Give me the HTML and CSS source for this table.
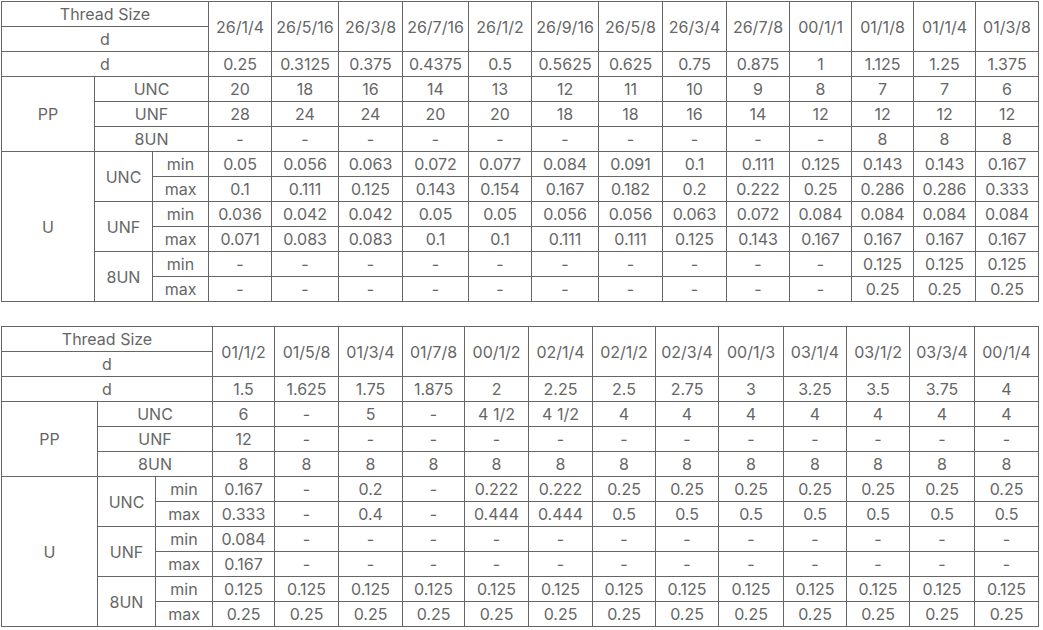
FILE: index.html
```html
<!DOCTYPE html>
<html>
<head>
<meta charset="utf-8">
<link rel="stylesheet" href="styles.css">
</head>
<body>
<div class="page">
<table class="spec t1">
<colgroup>
<col style="width:93px"><col style="width:58px"><col style="width:56px">
<col style="width:63px"><col style="width:67px"><col style="width:64px"><col style="width:66px"><col style="width:63px"><col style="width:67px"><col style="width:64px"><col style="width:64px"><col style="width:63px"><col style="width:62px"><col style="width:62px"><col style="width:62px"><col style="width:63px">
</colgroup>
<tr><td colspan="3">Thread Size</td><td rowspan="2">26/1/4</td><td rowspan="2">26/5/16</td><td rowspan="2">26/3/8</td><td rowspan="2">26/7/16</td><td rowspan="2">26/1/2</td><td rowspan="2">26/9/16</td><td rowspan="2">26/5/8</td><td rowspan="2">26/3/4</td><td rowspan="2">26/7/8</td><td rowspan="2">00/1/1</td><td rowspan="2">01/1/8</td><td rowspan="2">01/1/4</td><td rowspan="2">01/3/8</td></tr>
<tr><td colspan="3">d</td></tr>
<tr><td colspan="3">d</td><td>0.25</td><td>0.3125</td><td>0.375</td><td>0.4375</td><td>0.5</td><td>0.5625</td><td>0.625</td><td>0.75</td><td>0.875</td><td>1</td><td>1.125</td><td>1.25</td><td>1.375</td></tr>
<tr><td rowspan="3">PP</td><td colspan="2">UNC</td><td>20</td><td>18</td><td>16</td><td>14</td><td>13</td><td>12</td><td>11</td><td>10</td><td>9</td><td>8</td><td>7</td><td>7</td><td>6</td></tr>
<tr><td colspan="2">UNF</td><td>28</td><td>24</td><td>24</td><td>20</td><td>20</td><td>18</td><td>18</td><td>16</td><td>14</td><td>12</td><td>12</td><td>12</td><td>12</td></tr>
<tr><td colspan="2">8UN</td><td>-</td><td>-</td><td>-</td><td>-</td><td>-</td><td>-</td><td>-</td><td>-</td><td>-</td><td>-</td><td>8</td><td>8</td><td>8</td></tr>
<tr><td rowspan="6">U</td><td rowspan="2">UNC</td><td>min</td><td>0.05</td><td>0.056</td><td>0.063</td><td>0.072</td><td>0.077</td><td>0.084</td><td>0.091</td><td>0.1</td><td>0.111</td><td>0.125</td><td>0.143</td><td>0.143</td><td>0.167</td></tr>
<tr><td>max</td><td>0.1</td><td>0.111</td><td>0.125</td><td>0.143</td><td>0.154</td><td>0.167</td><td>0.182</td><td>0.2</td><td>0.222</td><td>0.25</td><td>0.286</td><td>0.286</td><td>0.333</td></tr>
<tr><td rowspan="2">UNF</td><td>min</td><td>0.036</td><td>0.042</td><td>0.042</td><td>0.05</td><td>0.05</td><td>0.056</td><td>0.056</td><td>0.063</td><td>0.072</td><td>0.084</td><td>0.084</td><td>0.084</td><td>0.084</td></tr>
<tr><td>max</td><td>0.071</td><td>0.083</td><td>0.083</td><td>0.1</td><td>0.1</td><td>0.111</td><td>0.111</td><td>0.125</td><td>0.143</td><td>0.167</td><td>0.167</td><td>0.167</td><td>0.167</td></tr>
<tr><td rowspan="2">8UN</td><td>min</td><td>-</td><td>-</td><td>-</td><td>-</td><td>-</td><td>-</td><td>-</td><td>-</td><td>-</td><td>-</td><td>0.125</td><td>0.125</td><td>0.125</td></tr>
<tr><td>max</td><td>-</td><td>-</td><td>-</td><td>-</td><td>-</td><td>-</td><td>-</td><td>-</td><td>-</td><td>-</td><td>0.25</td><td>0.25</td><td>0.25</td></tr>
</table>

<table class="spec t2">
<colgroup>
<col style="width:96px"><col style="width:58px"><col style="width:57px">
<col style="width:62px"><col style="width:64px"><col style="width:64px"><col style="width:62px"><col style="width:64px"><col style="width:64px"><col style="width:63px"><col style="width:63px"><col style="width:65px"><col style="width:63px"><col style="width:63px"><col style="width:65px"><col style="width:64px">
</colgroup>
<tr><td colspan="3">Thread Size</td><td rowspan="2">01/1/2</td><td rowspan="2">01/5/8</td><td rowspan="2">01/3/4</td><td rowspan="2">01/7/8</td><td rowspan="2">00/1/2</td><td rowspan="2">02/1/4</td><td rowspan="2">02/1/2</td><td rowspan="2">02/3/4</td><td rowspan="2">00/1/3</td><td rowspan="2">03/1/4</td><td rowspan="2">03/1/2</td><td rowspan="2">03/3/4</td><td rowspan="2">00/1/4</td></tr>
<tr><td colspan="3">d</td></tr>
<tr><td colspan="3">d</td><td>1.5</td><td>1.625</td><td>1.75</td><td>1.875</td><td>2</td><td>2.25</td><td>2.5</td><td>2.75</td><td>3</td><td>3.25</td><td>3.5</td><td>3.75</td><td>4</td></tr>
<tr><td rowspan="3">PP</td><td colspan="2">UNC</td><td>6</td><td>-</td><td>5</td><td>-</td><td>4 1/2</td><td>4 1/2</td><td>4</td><td>4</td><td>4</td><td>4</td><td>4</td><td>4</td><td>4</td></tr>
<tr><td colspan="2">UNF</td><td>12</td><td>-</td><td>-</td><td>-</td><td>-</td><td>-</td><td>-</td><td>-</td><td>-</td><td>-</td><td>-</td><td>-</td><td>-</td></tr>
<tr><td colspan="2">8UN</td><td>8</td><td>8</td><td>8</td><td>8</td><td>8</td><td>8</td><td>8</td><td>8</td><td>8</td><td>8</td><td>8</td><td>8</td><td>8</td></tr>
<tr><td rowspan="6">U</td><td rowspan="2">UNC</td><td>min</td><td>0.167</td><td>-</td><td>0.2</td><td>-</td><td>0.222</td><td>0.222</td><td>0.25</td><td>0.25</td><td>0.25</td><td>0.25</td><td>0.25</td><td>0.25</td><td>0.25</td></tr>
<tr><td>max</td><td>0.333</td><td>-</td><td>0.4</td><td>-</td><td>0.444</td><td>0.444</td><td>0.5</td><td>0.5</td><td>0.5</td><td>0.5</td><td>0.5</td><td>0.5</td><td>0.5</td></tr>
<tr><td rowspan="2">UNF</td><td>min</td><td>0.084</td><td>-</td><td>-</td><td>-</td><td>-</td><td>-</td><td>-</td><td>-</td><td>-</td><td>-</td><td>-</td><td>-</td><td>-</td></tr>
<tr><td>max</td><td>0.167</td><td>-</td><td>-</td><td>-</td><td>-</td><td>-</td><td>-</td><td>-</td><td>-</td><td>-</td><td>-</td><td>-</td><td>-</td></tr>
<tr><td rowspan="2">8UN</td><td>min</td><td>0.125</td><td>0.125</td><td>0.125</td><td>0.125</td><td>0.125</td><td>0.125</td><td>0.125</td><td>0.125</td><td>0.125</td><td>0.125</td><td>0.125</td><td>0.125</td><td>0.125</td></tr>
<tr><td>max</td><td>0.25</td><td>0.25</td><td>0.25</td><td>0.25</td><td>0.25</td><td>0.25</td><td>0.25</td><td>0.25</td><td>0.25</td><td>0.25</td><td>0.25</td><td>0.25</td><td>0.25</td></tr>
</table>
</div>
</body>
</html>
```

FILE: styles.css
```css
html, body {
  margin: 0;
  padding: 0;
  background: #fff;
}
.page {
  padding: 1px 0 0 1px;
  display: flex;
  flex-direction: column;
  gap: 24px;
  align-items: flex-start;
}
.spec {
  border-collapse: collapse;
  table-layout: fixed;
  width: 1037px;
  font-family: Inter, "Noto Sans", sans-serif;
  font-size: 16px;
  color: #666;
}
.spec td {
  border: 1px solid #666;
  height: 24px;
  padding: 1px 0 0;
  box-sizing: border-box;
  text-align: center;
  vertical-align: middle;
  line-height: 23px;
  white-space: nowrap;
  overflow: hidden;
}
```
